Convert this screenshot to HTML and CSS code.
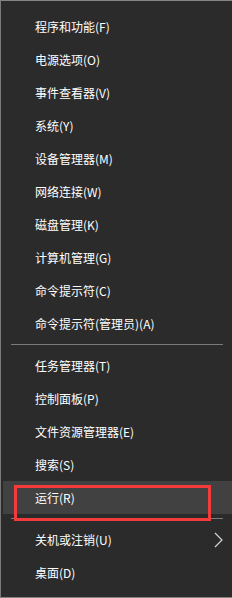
FILE: index.html
```html
<!DOCTYPE html>
<html lang="zh-CN">
<head>
    <meta charset="utf-8">
    <title>Win+X</title>
    <link rel="stylesheet" href="styles.css">
</head>
<body>
    <div class="menu">
        <div class="item">程序和功能(F)</div>
        <div class="item">电源选项(O)</div>
        <div class="item">事件查看器(V)</div>
        <div class="item">系统(Y)</div>
        <div class="item">设备管理器(M)</div>
        <div class="item">网络连接(W)</div>
        <div class="item">磁盘管理(K)</div>
        <div class="item">计算机管理(G)</div>
        <div class="item">命令提示符(C)</div>
        <div class="item">命令提示符(管理员)(A)</div>
        <div class="sep"></div>
        <div class="item">任务管理器(T)</div>
        <div class="item">控制面板(P)</div>
        <div class="item">文件资源管理器(E)</div>
        <div class="item">搜索(S)</div>
        <div class="item hover marked">运行(R)</div>
        <div class="sep"></div>
        <div class="item">
            <span>关机或注销(U)</span>
            <svg class="arrow" width="9" height="16" viewBox="0 0 9 16">
                <path d="M1 1 L8 8 L1 15" fill="none" stroke="#d6d6d6" stroke-width="1.2"/>
            </svg>
        </div>
        <div class="item">桌面(D)</div>
    </div>
</body>
</html>
```

FILE: styles.css
```css
*{
    margin:0;
    padding:0;
    box-sizing:border-box;
}
body{
    width:232px;
    height:598px;
    background-color:#2b2b2b;
    font-family:"Segoe UI","Noto Sans CJK SC","Noto Sans",sans-serif;
    font-size:12px;
    color:#ffffff;
}
.menu{
    width:232px;
    height:598px;
    background-color:#2b2b2b;
    border-top:1px solid #858585;
    border-left:1px solid #7a7a7a;
    border-bottom:1px solid #858585;
    padding-top:9px;
}
.item{
    position:relative;
    height:33px;
    line-height:33px;
    padding-left:34px;
    display:flex;
    align-items:center;
    justify-content:space-between;
    white-space:nowrap;
}
.item.hover{
    margin-left:2px;
    padding-left:32px;
    background-color:#414141;
}
/* red annotation frame */
.item.marked::after{
    content:"";
    position:absolute;
    left:11px;
    top:4px;
    width:191px;
    height:30px;
    border:3px solid #f43b3b;
}
.sep{
    height:1px;
    margin:4px 9px 4px 10px;
    background-color:#7a7a7a;
}
.arrow{
    margin-right:9px;
}
```
